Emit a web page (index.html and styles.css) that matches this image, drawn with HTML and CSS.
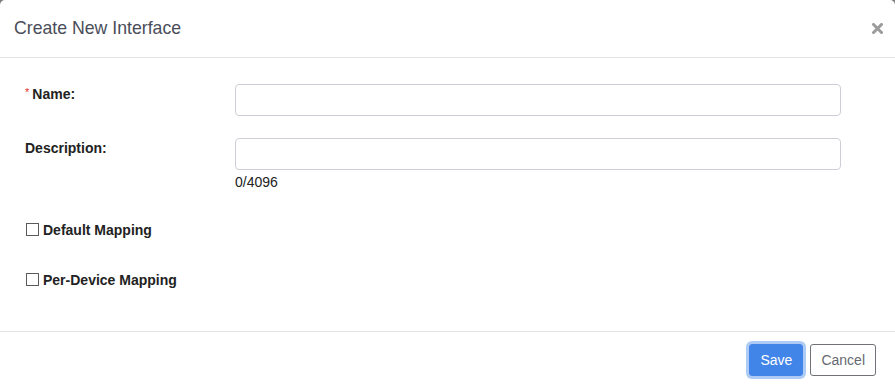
FILE: index.html
```html
<!DOCTYPE html>
<html lang="en">
<head>
    <meta charset="UTF-8">
    <title>Create New Interface</title>
    <link rel="stylesheet" href="styles.css">
</head>
<body>
<div class="modal">
    <div class="modal-header">
        <h4 class="modal-title">Create New Interface</h4>
        <button class="close" type="button" aria-label="Close">
            <svg width="11" height="11" viewBox="0 0 11 11">
                <path d="M1.5 1.5 L9.5 9.5 M9.5 1.5 L1.5 9.5" stroke="#9b9b9b" stroke-width="3" stroke-linecap="square"/>
            </svg>
        </button>
    </div>
    <div class="modal-body">
        <div class="form-row">
            <label class="form-label"><span class="required">*</span>Name:</label>
            <div class="form-field">
                <input class="form-control" type="text">
            </div>
        </div>
        <div class="form-row">
            <label class="form-label">Description:</label>
            <div class="form-field">
                <input class="form-control" type="text">
                <div class="counter">0/4096</div>
            </div>
        </div>
        <label class="check-row"><input type="checkbox" class="check">Default Mapping</label>
        <label class="check-row"><input type="checkbox" class="check">Per-Device Mapping</label>
    </div>
    <div class="modal-footer">
        <button class="btn btn-primary" type="button">Save</button>
        <button class="btn btn-default" type="button">Cancel</button>
    </div>
</div>
</body>
</html>
```

FILE: styles.css
```css
* {
    margin: 0;
    padding: 0;
    box-sizing: border-box;
}

html, body {
    height: 100%;
}

body {
    background-color: #7a7a7a;
    font-family: "Liberation Sans", Arial, sans-serif;
    font-size: 14px;
    color: #222;
    overflow: hidden;
}

.modal {
    background-color: #fff;
    border-radius: 5px 5px 0 0;
    height: 100%;
}

.modal-header {
    display: flex;
    align-items: center;
    justify-content: space-between;
    height: 58px;
    padding: 0 12px 1px 14px;
    border-bottom: 1px solid #e3e3e3;
}

.modal-title {
    font-size: 17.7px;
    font-weight: normal;
    color: #4a4d59;
    line-height: 27px;
}

.close {
    border: 0;
    background: none;
    width: 11px;
    height: 11px;
    display: flex;
    cursor: pointer;
}

.modal-body {
    height: 273px;
    padding: 26px 25px 0 25px;
}

.form-row {
    display: flex;
    align-items: flex-start;
    margin-bottom: 22px;
}

.form-label {
    width: 210px;
    flex-shrink: 0;
    font-weight: bold;
    line-height: 20px;
}

.required {
    color: #e0321e;
    font-size: 11px;
    font-weight: normal;
    line-height: 0;
    vertical-align: 3px;
    margin-right: 3px;
}

.form-field {
    width: 606px;
}

.form-control {
    display: block;
    width: 100%;
    height: 32px;
    border: 1px solid #ccd0d6;
    border-radius: 4px;
    padding: 0 10px;
    font-family: inherit;
    font-size: 14px;
    outline: none;
}

.counter {
    line-height: 20px;
    padding-top: 2px;
    color: #222;
}

.check-row {
    display: flex;
    align-items: center;
    font-weight: bold;
    line-height: 20px;
    margin-top: 28px;
    margin-bottom: 30px;
}

.check-row + .check-row {
    margin-top: 0;
}

.check {
    appearance: none;
    -webkit-appearance: none;
    width: 13px;
    height: 13px;
    border: 1px solid #5a5a5a;
    background-color: #fff;
    margin: 0 4px 2px 1px;
}

.modal-footer {
    display: flex;
    justify-content: flex-end;
    gap: 7px;
    padding: 12px 19px 0 0;
    border-top: 1px solid #e3e3e3;
}

.btn {
    height: 32px;
    padding: 0 10px;
    border-radius: 3px;
    font-family: inherit;
    font-size: 14px;
    cursor: pointer;
}

.btn-primary {
    background-color: #4285e8;
    border: 1px solid #4285e8;
    color: #fff;
    box-shadow: 0 0 0 3px #aecbf5;
}

.btn-default {
    background-color: #fff;
    border: 1px solid #6f7378;
    color: #666a70;
}
```
